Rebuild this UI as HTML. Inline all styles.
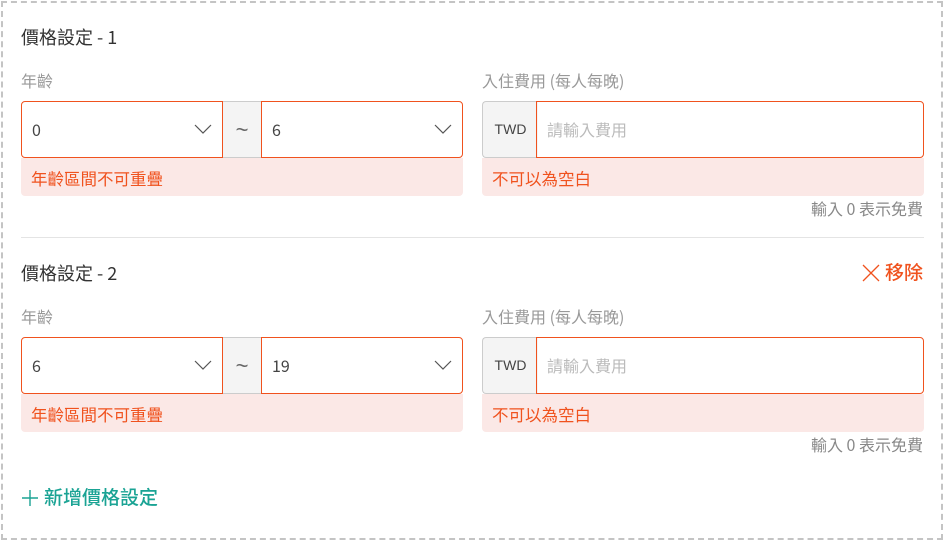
<!DOCTYPE html><html><head><meta charset="utf-8"><style>
*{box-sizing:border-box;margin:0;padding:0}
body{width:945px;height:541px;background:#fff;font-family:"Noto Sans CJK TC","Liberation Sans",sans-serif;position:relative;overflow:hidden}
.frame{position:absolute;left:1px;top:1px;width:942px;height:539px;border:2px dashed #c4c4c4}
.a{position:absolute;white-space:nowrap}
.title{font-size:18px;color:#333;line-height:22px}
.lbl{font-size:16px;color:#999;line-height:20px}
.sel{position:absolute;height:57px;border:1px solid #f0521e;background:#fff;font-size:16px;color:#444;padding:0 0 0 10px;line-height:55px}
.sel svg{position:absolute;right:10px;top:21px}
.tilde{position:absolute;height:57px;background:#f4f4f4;border-top:1px solid #ccc;border-bottom:1px solid #ccc;color:#666;text-align:center;line-height:55px;font-size:22px;font-family:"Liberation Sans",sans-serif}
.err{position:absolute;height:38px;background:#fbe8e6;border-radius:0 0 4px 4px;color:#f0521e;font-size:16.5px;line-height:40px;padding-left:10px}
.twd{position:absolute;width:56px;height:57px;background:#f4f4f4;border:1px solid #ccc;border-right:none;border-radius:4px 0 0 4px;font-size:14px;color:#444;text-align:center;line-height:55px;font-family:"Liberation Sans",sans-serif}
.inp{position:absolute;height:57px;border:1px solid #f0521e;border-radius:0 4px 4px 0;font-size:16px;color:#bbb;line-height:55px;padding-left:10px}
.hint{font-size:16px;color:#888;line-height:20px}
</style></head><body>
<div class="frame"></div>

<div class="a title" style="left:21px;top:26px">價格設定 - 1</div>
<div class="a lbl" style="left:21px;top:70px">年齡</div>
<div class="sel" style="left:21px;top:101px;width:202px;border-radius:4px 0 0 4px">0<svg width="18" height="12"><path d="M1 2l8 8 8-8" fill="none" stroke="#555" stroke-width="1.2"/></svg></div>
<div class="tilde" style="left:223px;top:101px;width:38px">~</div>
<div class="sel" style="left:261px;top:101px;width:202px;border-radius:0 4px 4px 0">6<svg width="18" height="12"><path d="M1 2l8 8 8-8" fill="none" stroke="#555" stroke-width="1.2"/></svg></div>
<div class="err" style="left:21px;top:158px;width:442px">年齡區間不可重疊</div>
<div class="a lbl" style="left:482px;top:70px">入住費用 (每人每晚)</div>
<div class="twd" style="left:482px;top:101px">TWD</div>
<div class="inp" style="left:536px;top:101px;width:388px">請輸入費用</div>
<div class="err" style="left:482px;top:158px;width:442px">不可以為空白</div>
<div class="a hint" style="right:22px;top:198px">輸入 0 表示免費</div>
<div class="a" style="left:21px;top:237px;width:903px;height:1px;background:#e4e4e4"></div>

<div class="a title" style="left:21px;top:262px">價格設定 - 2</div>
<div class="a" style="right:22px;top:260px;color:#f0521e;font-size:19px;line-height:24px;font-weight:500"><svg width="18" height="18" style="vertical-align:-3px;margin-right:5px"><path d="M1 1l16 16M17 1L1 17" stroke="#f0521e" stroke-width="1.3"/></svg>移除</div>
<div class="a lbl" style="left:21px;top:306px">年齡</div>
<div class="sel" style="left:21px;top:337px;width:202px;border-radius:4px 0 0 4px">6<svg width="18" height="12"><path d="M1 2l8 8 8-8" fill="none" stroke="#555" stroke-width="1.2"/></svg></div>
<div class="tilde" style="left:223px;top:337px;width:38px">~</div>
<div class="sel" style="left:261px;top:337px;width:202px;border-radius:0 4px 4px 0">19<svg width="18" height="12"><path d="M1 2l8 8 8-8" fill="none" stroke="#555" stroke-width="1.2"/></svg></div>
<div class="err" style="left:21px;top:394px;width:442px">年齡區間不可重疊</div>
<div class="a lbl" style="left:482px;top:306px">入住費用 (每人每晚)</div>
<div class="twd" style="left:482px;top:337px">TWD</div>
<div class="inp" style="left:536px;top:337px;width:388px">請輸入費用</div>
<div class="err" style="left:482px;top:394px;width:442px">不可以為空白</div>
<div class="a hint" style="right:22px;top:434px">輸入 0 表示免費</div>

<div class="a" style="left:22px;top:485px;color:#1aa394;font-size:19px;line-height:24px;font-weight:500"><svg width="16" height="16" style="vertical-align:-2px;margin-right:6px"><path d="M8 0v16M0 8h16" stroke="#1aa394" stroke-width="1.4"/></svg>新增價格設定</div>
</body></html>
